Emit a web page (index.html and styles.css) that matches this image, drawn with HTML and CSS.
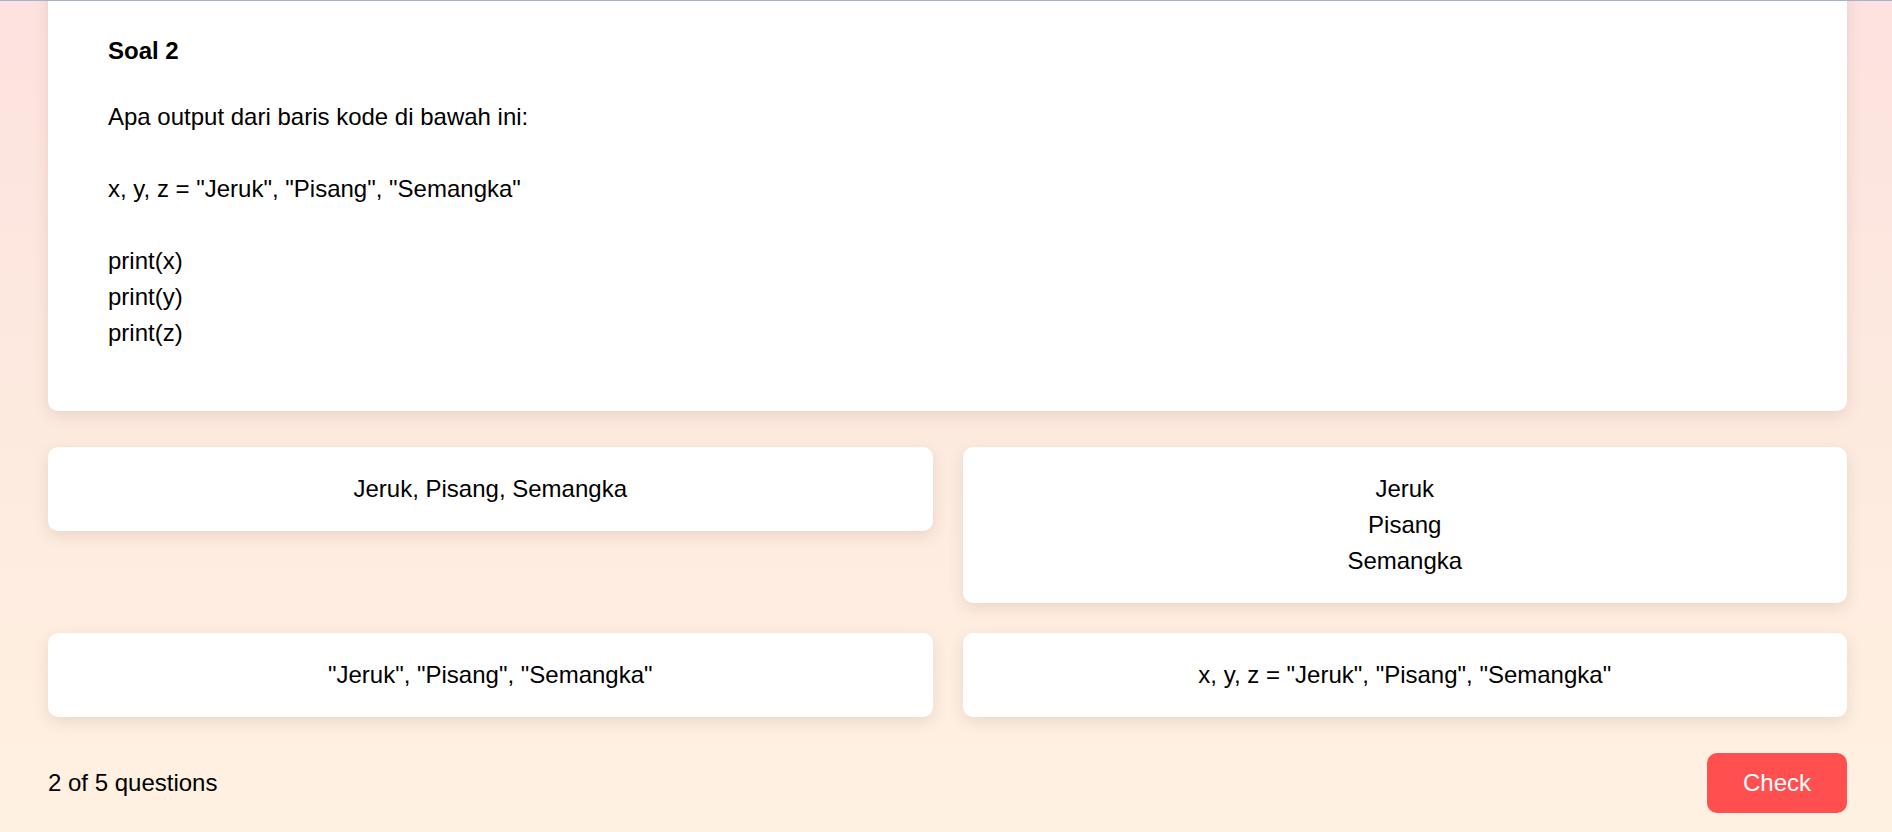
FILE: index.html
```html
<!DOCTYPE html>
<html lang="id">
<head>
<meta charset="utf-8">
<title>Quiz</title>
<link rel="stylesheet" href="styles.css">
</head>
<body>
<main class="quiz">
  <section class="question-card">
    <h2 class="question-title">Soal 2</h2>
    <p class="question-text">Apa output dari baris kode di bawah ini:

x, y, z = "Jeruk", "Pisang", "Semangka"

print(x)
print(y)
print(z)</p>
  </section>

  <div class="options">
    <button class="option">Jeruk, Pisang, Semangka</button>
    <button class="option">Jeruk
Pisang
Semangka</button>
    <button class="option">"Jeruk", "Pisang", "Semangka"</button>
    <button class="option">x, y, z = "Jeruk", "Pisang", "Semangka"</button>
  </div>

  <footer class="quiz-footer">
    <span class="progress">2 of 5 questions</span>
    <button class="check-btn">Check</button>
  </footer>
</main>
</body>
</html>
```

FILE: styles.css
```css
html {
  height: 100%;
  background: linear-gradient(to bottom, #fde2df 0%, #fdeadf 50%, #fff1e1 100%);
}

body {
  margin: 0;
  min-height: 100%;
  overflow: hidden;
  border-top: 1px solid #a6b2ca;
  font-family: "Liberation Sans", Arial, sans-serif;
  font-size: 24px;
  line-height: 36px;
  color: #000;
}

.quiz {
  margin-top: -28px;
  padding: 0 45px 19px 48px;
  display: flex;
  flex-direction: column;
}

.question-card {
  background: #fff;
  border-radius: 10px;
  padding: 60px;
  box-shadow: 0 5px 15px rgba(120, 80, 60, 0.14);
}

.question-title {
  margin: 0 0 30px;
  font-size: 24px;
  line-height: 36px;
  font-weight: bold;
}

.question-text {
  margin: 0;
  white-space: pre-line;
}

.options {
  margin-top: 36px;
  display: grid;
  grid-template-columns: 1fr 1fr;
  gap: 30px;
  align-items: start;
}

.option {
  background: #fff;
  border: none;
  border-radius: 10px;
  padding: 24px;
  font-family: inherit;
  font-size: 24px;
  line-height: 36px;
  color: #000;
  text-align: center;
  white-space: pre-line;
  box-shadow: 0 5px 15px rgba(120, 80, 60, 0.14);
}

.quiz-footer {
  margin-top: 36px;
  display: flex;
  justify-content: space-between;
  align-items: center;
}

.check-btn {
  background: #ff4f4f;
  color: #fff;
  border: none;
  border-radius: 10px;
  padding: 12px 36px;
  font-family: inherit;
  font-size: 24px;
  line-height: 36px;
}
```
